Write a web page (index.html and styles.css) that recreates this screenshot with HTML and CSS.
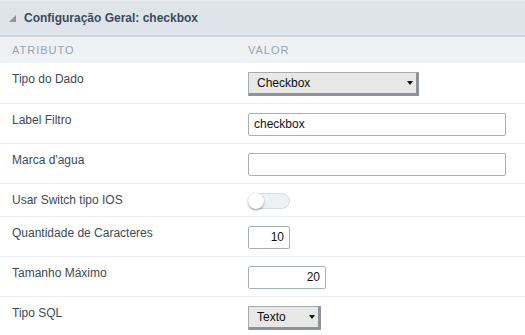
FILE: index.html
```html
<!DOCTYPE html>
<html>
<head>
<meta charset="utf-8">
<link rel="stylesheet" href="styles.css">
</head>
<body>
<div class="panel">
  <div class="panel-head">
    <span class="caret"></span>
    <span class="title">Configuração Geral: checkbox</span>
  </div>
  <div class="row head-row">
    <div class="col-label">Atributo</div>
    <div class="col-value">Valor</div>
  </div>
  <div class="row">
    <div class="label">Tipo do Dado</div>
    <div class="value"><div class="select w-170"><span>Checkbox</span><span class="arrow"></span></div></div>
  </div>
  <div class="row">
    <div class="label">Label Filtro</div>
    <div class="value"><div class="input w-258">checkbox</div></div>
  </div>
  <div class="row">
    <div class="label">Marca d'agua</div>
    <div class="value"><div class="input w-258"></div></div>
  </div>
  <div class="row">
    <div class="label">Usar Switch tipo IOS</div>
    <div class="value"><div class="switch"><span class="knob"></span></div></div>
  </div>
  <div class="row">
    <div class="label">Quantidade de Caracteres</div>
    <div class="value"><div class="input num w-42">10</div></div>
  </div>
  <div class="row">
    <div class="label">Tamanho Máximo</div>
    <div class="value"><div class="input num w-78">20</div></div>
  </div>
  <div class="row">
    <div class="label">Tipo SQL</div>
    <div class="value"><div class="select w-73"><span>Texto</span><span class="arrow"></span></div></div>
  </div>
</div>
</body>
</html>
```
FILE: styles.css
```css
html, body {
  margin: 0;
  padding: 0;
  background: #ffffff;
}
body {
  font-family: "Liberation Sans", Arial, sans-serif;
  overflow: hidden;
}
.panel {
  width: 525px;
}
.panel-head {
  height: 34px;
  background: #dfe4ea;
  border-top: 1px solid #e6eaef;
  border-bottom: 2px solid #cfd6dd;
  display: flex;
  align-items: center;
  padding-left: 9px;
  box-sizing: content-box;
}
.caret {
  width: 0;
  height: 0;
  border-left: 7px solid transparent;
  border-bottom: 7px solid #8b96a2;
  margin-right: 8px;
  margin-top: 1px;
}
.title {
  font-size: 12px;
  font-weight: bold;
  color: #3b4a5b;
}
.row {
  display: grid;
  grid-template-columns: 248px 1fr;
  border-bottom: 1px solid #e9edf1;
  padding: 9px 0 7px;
}
.head-row {
  background: #eff2f5;
  border-bottom: none;
  padding: 0;
  height: 26px;
  align-items: center;
  font-size: 11px;
  letter-spacing: 1px;
  text-transform: uppercase;
  color: #94a3b0;
}
.col-label {
  padding-left: 12px;
}
.label {
  padding-left: 12px;
  font-size: 12px;
  line-height: 15px;
  color: #3d4a5a;
}
.value {
  display: flex;
}
.input {
  height: 23px;
  box-sizing: border-box;
  border: 1px solid #a9afb7;
  border-radius: 2px;
  background: #fff;
  font-size: 12px;
  line-height: 21px;
  padding: 0 5px;
  color: #111;
}
.num {
  text-align: right;
}
.w-258 { width: 258px; }
.w-42 { width: 42px; }
.w-78 { width: 78px; }
.w-170 { width: 171px; }
.w-73 { width: 73px; }
.select {
  height: 24px;
  box-sizing: border-box;
  border: 1px solid #a6abb1;
  border-right: 3px solid #8e9399;
  border-bottom: 3px solid #8e9399;
  border-radius: 1px;
  background: #e8e8e6;
  font-size: 12px;
  color: #111;
  display: flex;
  align-items: center;
  justify-content: space-between;
  padding: 0 3px 0 8px;
}
.arrow {
  width: 0;
  height: 0;
  border-left: 3px solid transparent;
  border-right: 3px solid transparent;
  border-top: 4px solid #111;
}
.switch {
  width: 42px;
  height: 16px;
  box-sizing: border-box;
  border: 1px solid #d6dde3;
  border-radius: 9px;
  background: #eef1f4;
  position: relative;
}
.knob {
  position: absolute;
  left: -1px;
  top: -1px;
  width: 16px;
  height: 16px;
  border-radius: 50%;
  background: #fff;
  box-shadow: 0 1px 2px rgba(0,0,0,0.45);
}
```
